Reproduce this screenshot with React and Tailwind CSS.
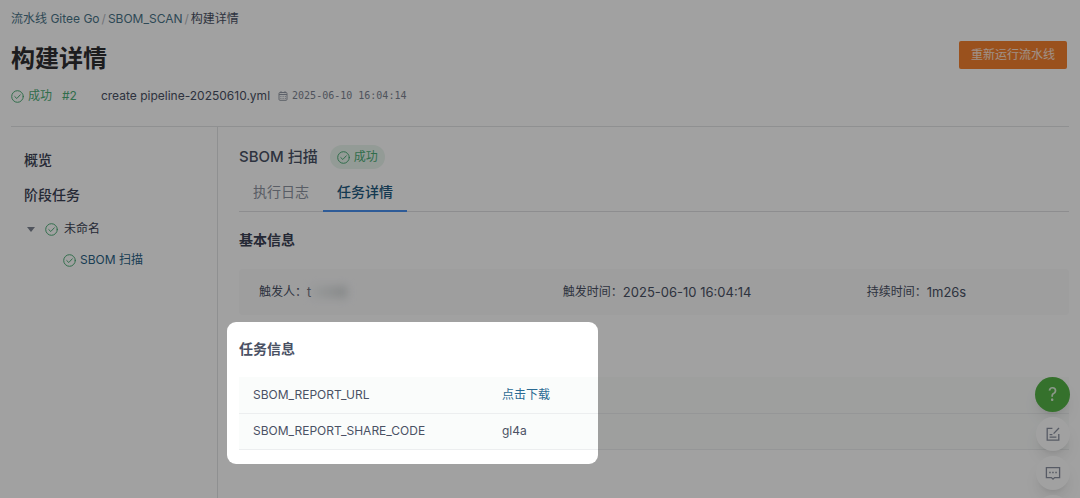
import React, { useState } from 'react';

const infoItems = [
    { label: '触发人：', value: 't', masked: true },
    { label: '触发时间：', value: '2025-06-10 16:04:14' },
    { label: '持续时间：', value: '1m26s' },
];

const CheckCircle = () => (
    <svg viewBox="0 0 13 13" className="size-[13px] shrink-0 text-[#4fae78]" fill="none" stroke="currentColor" strokeLinecap="round" strokeLinejoin="round" aria-hidden="true">
        <circle cx="6.5" cy="6.5" r="5.8" />
        <path d="M3.8 6.6 5.8 8.5 9.3 4.8" />
    </svg>
);

const CalendarIcon = () => (
    <svg viewBox="0 0 10 10" className="size-2.5 shrink-0 text-[#949aa6]" fill="none" stroke="currentColor" aria-hidden="true">
        <rect x="1" y="1.5" width="8" height="7.8" rx="1" />
        <path d="M1 3.5h8M3 0.2v2M7 0.2v2" />
        <path d="M2.4 5.4h5.4M2.4 7.4h5.4" strokeDasharray="1 1.2" />
    </svg>
);

const EditIcon = () => (
    <svg viewBox="0 0 16 16" className="size-4" fill="none" stroke="currentColor" strokeWidth="1.3" aria-hidden="true">
        <path d="M7.4 2.4H2.2v11.8h11.6V8" />
        <path d="M14 2 8.6 7.6" />
        <path d="M4.6 8.6h2.8M4.6 11.2h6.8" />
    </svg>
);

const MessageIcon = () => (
    <svg viewBox="0 0 16 16" className="size-4" fill="none" stroke="currentColor" strokeWidth="1.3" aria-hidden="true">
        <path d="M1.4 2.6h13.2v10H9.6L8 14.2l-1.6-1.6H1.4z" />
        <path d="M4.2 7.6h1.5M7.2 7.6h1.5M10.3 7.6h1.5" strokeWidth="1.5" />
    </svg>
);

const Header = () => (
    <header className="border-b border-[#e3e4e6] pt-2.5">
        <nav className="flex items-center gap-0.5 text-xs leading-[18px] text-[#4a7488]">
            <a href="#go">流水线 Gitee Go</a>
            <span className="text-[#b4b8bf]">/</span>
            <a href="#scan">SBOM_SCAN</a>
            <span className="text-[#b4b8bf]">/</span>
            <span className="text-[#4a5164]">构建详情</span>
        </nav>
        <div className="mt-[13px] flex items-start justify-between pr-0.5">
            <h1 className="text-2xl leading-9 font-bold text-[#2f2f31]">构建详情</h1>
            <button className="h-7 rounded-xs bg-[#f4802f] px-3 text-xs text-white/80">重新运行流水线</button>
        </div>
        <div className="mt-[9px] mb-5 flex items-center leading-5">
            <CheckCircle />
            <span className="ml-1 text-xs text-[#4fae78]">成功</span>
            <span className="ml-2.5 text-xs text-[#4fae78]">#2</span>
            <span className="ml-6 text-xs text-[#4a5164]">create pipeline-20250610.yml</span>
            <span className="ml-2 flex items-center gap-1 font-['DejaVu_Sans_Mono',monospace] text-[10px] text-[#7d8492]">
                <CalendarIcon />
                2025-06-10 16:04:14
            </span>
        </div>
    </header>
);

const Sidebar = () => (
    <aside className="w-[207px] shrink-0 border-r border-[#e3e4e6] pt-[23px] pl-[13px] text-[#3b4154]">
        <a href="#overview" className="block text-sm leading-5 font-medium">概览</a>
        <h3 className="mt-[15px] text-sm leading-5 font-medium">阶段任务</h3>
        <button className="mt-3.5 flex items-center text-xs leading-5">
            <svg viewBox="0 0 8 5" className="ml-[3px] h-[5px] w-2 text-[#7d8492]" aria-hidden="true">
                <path d="M0 0h8L4 5z" fill="currentColor" />
            </svg>
            <span className="ml-2.5 flex items-center gap-1.5">
                <CheckCircle />
                未命名
            </span>
        </button>
        <a href="#task" className="mt-[11px] ml-[39px] flex items-center gap-1 text-xs leading-5 text-[#2a6285]">
            <CheckCircle />
            SBOM 扫描
        </a>
    </aside>
);

const Tabs = () => {
    const [tab, setTab] = useState('detail');
    const base = '-mb-px border-b-2 px-3.5 pb-2 text-sm leading-5';
    const on = 'border-[#4a90f0] font-medium text-[#1f5b80]';
    const off = 'border-transparent text-[#8d93a0]';

    return (
        <div role="tablist" className="mt-[13px] flex border-b border-[#dfe0e3]">
            <button role="tab" aria-selected={tab === 'log'} onClick={() => setTab('log')} className={`${base} ${tab === 'log' ? on : off}`}>
                执行日志
            </button>
            <button role="tab" aria-selected={tab === 'detail'} onClick={() => setTab('detail')} className={`${base} ${tab === 'detail' ? on : off}`}>
                任务详情
            </button>
        </div>
    );
};

const TaskInfo = () => (
    <section className="relative mt-6">
        <h3 className="text-sm leading-5 font-bold text-[#4a5164]">任务信息</h3>
        <table className="mt-[18px] w-full table-fixed bg-[#fafcfb] text-left text-xs text-[#4a5164]">
            <tbody>
                <tr className="h-9 border-b border-[#eceeef]">
                    <th scope="row" className="w-[30%] px-3.5 font-normal">SBOM_REPORT_URL</th>
                    <td className="px-3.5"><a href="#download" className="text-[#2a6a92]">点击下载</a></td>
                </tr>
                <tr className="h-9 border-b border-[#eceeef]">
                    <th scope="row" className="px-3.5 font-normal">SBOM_REPORT_SHARE_CODE</th>
                    <td className="px-3.5">gl4a</td>
                </tr>
            </tbody>
        </table>
        {/* spotlight: the spread shadow dims the rest of the page */}
        <div className="pointer-events-none absolute -top-[17px] -bottom-3.5 -left-3 z-20 w-[371px] rounded-[9px] shadow-[0_0_0_9999px_rgba(0,0,0,0.37)]"></div>
    </section>
);

const FloatingActions = () => (
    <div className="fixed right-2.5 -bottom-[31px] z-10 flex flex-col items-center gap-[5px] text-[#8b91a0]">
        <button aria-label="帮助" className="flex size-[35px] items-center justify-center rounded-full bg-[#55b347] text-lg text-white/80 shadow-lg">?</button>
        <button aria-label="反馈" className="flex size-[34px] items-center justify-center rounded-full bg-white shadow-lg">
            <EditIcon />
        </button>
        <button aria-label="评论" className="flex size-[34px] items-center justify-center rounded-full bg-white shadow-lg">
            <MessageIcon />
        </button>
        <button aria-label="返回顶部" className="size-[34px] rounded-full bg-white shadow-lg"></button>
    </div>
);

const App = () => {
    return (
        <div className="flex min-h-screen flex-col overflow-hidden bg-white px-[11px] font-['Inter','Noto_Sans_CJK_SC',sans-serif]">
            <Header />
            <div className="flex flex-1">
                <Sidebar />
                <main className="min-w-0 flex-1 pt-[18px] pl-[21px]">
                    <div className="flex items-center gap-3">
                        <h2 className="text-[15px] leading-6 font-medium text-[#4a5164]">SBOM 扫描</h2>
                        <span className="flex h-6 items-center gap-1 rounded-full bg-[#e9f5ee] px-[7px] text-xs text-[#4fae78]">
                            <CheckCircle />
                            成功
                        </span>
                    </div>
                    <Tabs />
                    <section className="mt-[18px]">
                        <h3 className="text-sm leading-5 font-bold text-[#3b4154]">基本信息</h3>
                        <dl className="mt-[19px] grid grid-cols-[5fr_5fr_3fr] rounded bg-[#fafafb] px-5 py-3.5 text-xs leading-[18px] text-[#4a5164]">
                            {infoItems.map((item) => (
                                <div key={item.label} className="flex items-center">
                                    <dt>{item.label}</dt>
                                    <dd className="flex items-center text-[13px]">
                                        {item.value}
                                        {item.masked && <span className="h-3 w-9 bg-linear-to-r from-[#f2f4f4] to-[#d3d7d8] blur-xs"></span>}
                                    </dd>
                                </div>
                            ))}
                        </dl>
                    </section>
                    <TaskInfo />
                </main>
            </div>
            <FloatingActions />
        </div>
    );
};

export default App;
